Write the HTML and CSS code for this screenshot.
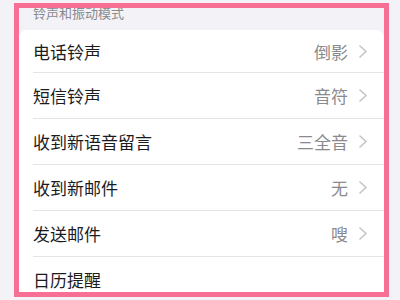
FILE: index.html
```html
<!DOCTYPE html>
<html>

<head>
  <title>铃声和振动模式</title>
  <meta name="viewport" content="width=device-width, initial-scale=1">
  <link rel="stylesheet" href="styles.css">
</head>

<body>

  <div class="frame">
    <div class="section-title"><span>铃声和振动模式</span></div>

    <ul class="card">
      <li class="row">
        <span class="label">电话铃声</span>
        <span class="value">倒影</span>
        <svg class="chevron" width="8" height="13" viewBox="0 0 8 13"><path d="M1 1l6 5.5L1 12" /></svg>
      </li>
      <li class="row">
        <span class="label">短信铃声</span>
        <span class="value">音符</span>
        <svg class="chevron" width="8" height="13" viewBox="0 0 8 13"><path d="M1 1l6 5.5L1 12" /></svg>
      </li>
      <li class="row">
        <span class="label">收到新语音留言</span>
        <span class="value">三全音</span>
        <svg class="chevron" width="8" height="13" viewBox="0 0 8 13"><path d="M1 1l6 5.5L1 12" /></svg>
      </li>
      <li class="row">
        <span class="label">收到新邮件</span>
        <span class="value">无</span>
        <svg class="chevron" width="8" height="13" viewBox="0 0 8 13"><path d="M1 1l6 5.5L1 12" /></svg>
      </li>
      <li class="row">
        <span class="label">发送邮件</span>
        <span class="value">嗖</span>
        <svg class="chevron" width="8" height="13" viewBox="0 0 8 13"><path d="M1 1l6 5.5L1 12" /></svg>
      </li>
      <li class="row">
        <span class="label">日历提醒</span>
      </li>
    </ul>
  </div>

</body>

</html>
```

FILE: styles.css
```css
* {
  box-sizing: border-box;
}

body {
  margin: 0;
  background: #f2f2f7;
  font-family: "Noto Sans CJK SC", "Noto Sans", sans-serif;
}

/* Pink highlight frame round the settings group */
.frame {
  margin: 3px 11px 0 14px;
  height: 294px;
  border: 5px solid #f86f96;
  background: #f2f2f7;
  overflow: hidden;
}

/* Group header */
.section-title {
  height: 22px;
  padding: 0 14px 11px 14px;
  display: flex;
  align-items: flex-end;
  font-size: 13px;
  line-height: 13px;
  color: #8a8a8e;
}

/* The white list */
.card {
  margin: 0;
  padding: 0;
  list-style: none;
  background: #fff;
  border-radius: 8px 8px 0 0;
}

.row {
  height: 46px;
  margin-left: 14px;
  padding-right: 17px;
  display: flex;
  align-items: center;
  border-bottom: 1px solid #e4e4e7;
  font-size: 17px;
}

.row:first-child {
  height: 43px;
}

.label {
  flex: 1;
  color: #1c1c1e;
}

.value {
  color: #8a8a8e;
  margin-right: 11px;
}

.chevron path {
  fill: none;
  stroke: #c4c4c8;
  stroke-width: 1.6;
  stroke-linecap: round;
  stroke-linejoin: round;
}
```
